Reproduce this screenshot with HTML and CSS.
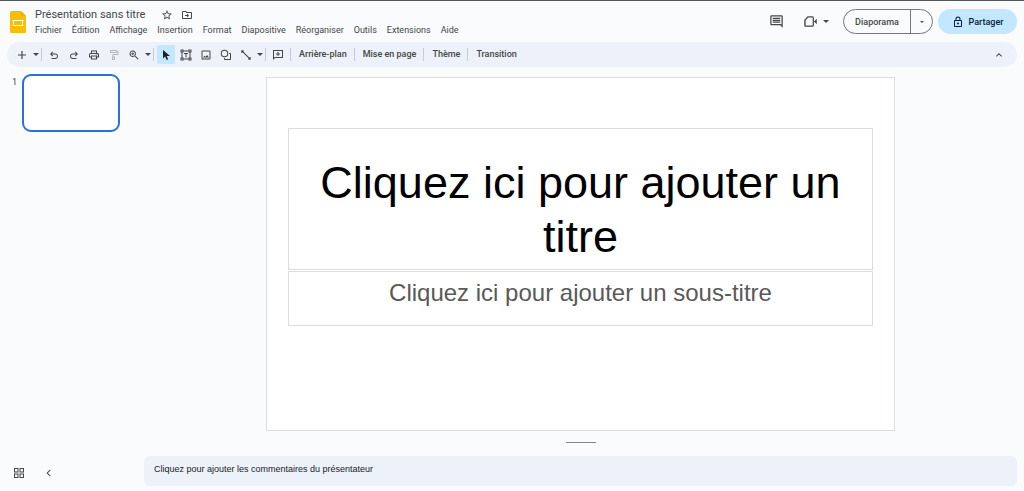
FILE: index.html
```html
<!DOCTYPE html>
<html lang="fr">
<head>
<meta charset="utf-8">
<title>Présentation sans titre</title>
<link rel="stylesheet" href="styles.css">
</head>
<body>
<header class="header">
  <svg class="logo" viewBox="0 0 16 22" aria-hidden="true"><path fill="#fbbc04" d="M1.500 0H11l5 5v15.500a1.500 1.500 0 0 1-1.500 1.500h-13A1.500 1.500 0 0 1 0 20.500v-19A1.500 1.500 0 0 1 1.500 0z"/><path fill="#f5ab00" d="M11 0l5 5h-5z"/><path fill="none" stroke="#fff" stroke-width="1" d="M3.500 9.500h9v5h-9z"/><path fill="#fff" d="M2.500 9h1v1h-1zM12.500 9h1v1h-1zM2.500 14h1v1h-1zM12.500 14h1v1h-1z"/></svg>
  <div class="heading">
    <div class="title-row">
      <h1 class="doc-title">Présentation sans titre</h1>
      <button class="icon-btn" aria-label="Favori"><svg class="icon" viewBox="0 0 24 24"><path d="M22 9.240l-7.190-.620L12 2 9.190 8.630 2 9.240l5.460 4.730L5.820 21 12 17.270 18.180 21l-1.630-7.030L22 9.240zM12 15.400l-3.760 2.270 1-4.280-3.320-2.880 4.380-.380L12 6.100l1.710 4.040 4.380.380-3.320 2.880 1 4.280L12 15.400z"/></svg></button>
      <button class="icon-btn" aria-label="Déplacer"><svg class="icon" viewBox="0 0 24 24"><path d="M20 6h-8l-2-2H4a2 2 0 0 0-2 2v12c0 1.100.9 2 2 2h16a2 2 0 0 0 2-2V8a2 2 0 0 0-2-2zm0 12H4V6h5.200l2 2H20v10zm-8-1 4-4-4-4v3H8v2h4v3z"/></svg></button>
    </div>
    <nav class="menus">
      <button>Fichier</button><button>Édition</button><button>Affichage</button><button>Insertion</button><button>Format</button><button>Diapositive</button><button>Réorganiser</button><button>Outils</button><button>Extensions</button><button>Aide</button>
    </nav>
  </div>
  <div class="actions">
    <button class="icon-btn" aria-label="Commentaires"><svg class="icon-lg" viewBox="0 0 24 24"><path d="M22 4a2 2 0 0 0-2-2H4a2 2 0 0 0-2 2v12c0 1.100.9 2 2 2h14l4 4V4zm-2 13.200L18.800 16H4V4h16v13.200zM6 12h12v2H6zm0-3h12v2H6zm0-3h12v2H6z"/></svg></button>
    <button class="icon-btn meet" aria-label="Visioconférence"><svg class="icon-lg" viewBox="0 0 24 24"><path d="M7.500 3.500H15a2.500 2.500 0 0 1 2.500 2.500v12a2.500 2.500 0 0 1-2.500 2.500H4a2 2 0 0 1-2-2V9.500zM8.300 5.700 4.200 10.300v8h11.300V5.700zM17.500 12 22 7.500v9z"/></svg><i class="caret"></i></button>
    <div class="split">
      <button class="present">Diaporama</button><button class="present-more" aria-label="Options du diaporama"><i class="caret"></i></button>
    </div>
    <button class="share"><svg class="icon" viewBox="0 0 24 24"><path d="M18 8h-1V6A5 5 0 0 0 7 6v2H6a2 2 0 0 0-2 2v10c0 1.100.9 2 2 2h12a2 2 0 0 0 2-2V10a2 2 0 0 0-2-2zM9 6a3 3 0 0 1 6 0v2H9V6zm9 14H6V10h12v10zm-6-3a2 2 0 1 0 0-4 2 2 0 0 0 0 4z"/></svg>Partager</button>
  </div>
</header>

<div class="toolbar" role="toolbar">
  <div class="group">
    <button class="tool" aria-label="Nouvelle diapositive"><svg class="icon" viewBox="0 0 24 24"><path d="M20 13.200h-6.800V20h-2.400v-6.800H4v-2.400h6.800V4h2.400v6.800H20z"/></svg></button>
    <button class="drop" aria-label="Mise en page de la nouvelle diapositive"><i class="caret"></i></button>
  </div>
  <div class="group">
    <button class="tool" aria-label="Annuler"><svg class="icon" viewBox="0 0 24 24"><path d="M7 20v-2h7.500c2 0 3.500-1.400 3.500-3.500S16.500 11 14.500 11H7.800l2.600 2.600L9 15l-5-5 5-5 1.400 1.400L7.800 9h6.700c3.200 0 5.500 2.400 5.500 5.500S17.700 20 14.500 20z"/></svg></button>
    <button class="tool" aria-label="Rétablir"><svg class="icon" viewBox="0 0 24 24"><path d="M17 20v-2H9.500C7.500 18 6 16.600 6 14.500S7.500 11 9.500 11h6.700l-2.600 2.600L15 15l5-5-5-5-1.400 1.400L16.200 9H9.500C6.300 9 4 11.400 4 14.500S6.300 20 9.500 20z"/></svg></button>
    <button class="tool" aria-label="Imprimer"><svg class="icon" viewBox="0 0 24 24"><path d="M19 8h-1V3H6v5H5a3 3 0 0 0-3 3v6h4v4h12v-4h4v-6a3 3 0 0 0-3-3zM8 5h8v3H8V5zm8 14H8v-4h8v4zm4-4h-2v-2H6v2H4v-4c0-.6.4-1 1-1h14c.6 0 1 .4 1 1v4zm-3-3.500a1 1 0 1 0 2 0 1 1 0 0 0-2 0z"/></svg></button>
    <button class="tool" aria-label="Reproduire la mise en forme" disabled><svg class="icon" viewBox="0 0 24 24"><path d="M18 4V3c0-.6-.4-1-1-1H5c-.6 0-1 .4-1 1v4c0 .6.4 1 1 1h12c.6 0 1-.4 1-1V6h1v4H9v5H8v7h6v-7h-3v-3h10V4h-3zM6 6V4h10v2H6zm6 11v3h-2v-3z"/></svg></button>
    <button class="tool" aria-label="Zoom"><svg class="icon" viewBox="0 0 24 24"><path d="M15.500 14h-.8l-.3-.3A6.500 6.500 0 1 0 13.700 14.400l.3.300v.8l5.500 5.500 1.500-1.500-5.500-5.500zm-6 0a4.500 4.500 0 1 1 0-9 4.500 4.500 0 0 1 0 9zM10.500 7h-2v1.500H7v2h1.500V12h2v-1.500H12v-2h-1.500z"/></svg></button>
    <button class="drop" aria-label="Niveau de zoom"><i class="caret"></i></button>
  </div>
  <div class="group">
    <button class="tool tool-active" aria-label="Sélectionner" aria-pressed="true"><svg class="icon" viewBox="0 0 24 24"><path d="M6 2v17l4.300-4 3 7 3-1.300-3-6.700H20L6 2z"/></svg></button>
    <button class="tool" aria-label="Zone de texte"><svg class="icon" viewBox="0 0 24 24"><path d="M1 1h6v2h10V1h6v6h-2v10h2v6h-6v-2H7v2H1v-6h2V7H1V1zm6 6H5v10h2v2h10v-2h2V7h-2V5H7v2zM3 3v2h2V3H3zm16 0v2h2V3h-2zM3 19v2h2v-2H3zm16 0v2h2v-2h-2zM8 8h8v2h-3v7h-2v-7H8z"/></svg></button>
    <button class="tool" aria-label="Image"><svg class="icon" viewBox="0 0 24 24"><path d="M19 3H5a2 2 0 0 0-2 2v14c0 1.100.9 2 2 2h14a2 2 0 0 0 2-2V5a2 2 0 0 0-2-2zm0 16H5V5h14v14zM6 17h12l-3.900-5-2.900 3.700-2.100-2.400z"/></svg></button>
    <button class="tool" aria-label="Forme"><svg class="icon" viewBox="0 0 24 24"><path d="M9 1.500a7.500 7.500 0 1 0 0 15 7.500 7.500 0 0 0 0-15zm0 2a5.500 5.500 0 1 1 0 11 5.500 5.500 0 0 1 0-11zM18 8h2a2 2 0 0 1 2 2v10a2 2 0 0 1-2 2H10a2 2 0 0 1-2-2v-2h2v2h10V10h-2z"/></svg></button>
    <button class="tool" aria-label="Ligne"><svg class="icon" viewBox="0 0 24 24"><path d="M2.500 2.500h4.800v3.300l10.900 10.900h3.300v4.800h-4.800v-3.300L5.800 7.300H2.500z"/></svg></button>
    <button class="drop" aria-label="Types de ligne"><i class="caret"></i></button>
  </div>
  <div class="group">
    <button class="tool" aria-label="Ajouter un commentaire"><svg class="icon" viewBox="0 0 24 24"><path d="M2 2h20v16H6l-4 4V2zm2 2v13l1-1h15V4H4zm7 2h2v3h3v2h-3v3h-2v-3H8V9h3z"/></svg></button>
  </div>
  <div class="group"><button class="text-tool">Arrière-plan</button></div>
  <div class="group"><button class="text-tool">Mise en page</button></div>
  <div class="group"><button class="text-tool">Thème</button></div>
  <div class="group"><button class="text-tool">Transition</button></div>
  <button class="tool collapse" aria-label="Masquer les menus"><svg class="icon" viewBox="0 0 24 24"><path d="M12 8l-6 6 1.400 1.400L12 10.800l4.600 4.600L18 14z"/></svg></button>
</div>

<main class="workspace">
  <aside class="filmstrip">
    <div class="film-item"><span class="film-number">1</span><button class="thumb" aria-label="Diapositive 1"></button></div>
    <div class="film-footer">
      <button class="icon-btn" aria-label="Vue grille"><svg class="icon" viewBox="0 0 24 24"><path d="M2 2h9v9H2V2zm2 2v5h5V4H4zm9-2h9v9h-9V2zm2 2v5h5V4h-5zM2 13h9v9H2v-9zm2 2v5h5v-5H4zm9-2h9v9h-9v-9zm2 2v5h5v-5h-5z"/></svg></button>
      <button class="icon-btn" aria-label="Masquer la pellicule"><svg class="icon" viewBox="0 0 24 24"><path d="M15.400 6.400 14 5l-7 7 7 7 1.400-1.400L9.800 12z"/></svg></button>
    </div>
  </aside>
  <section class="editor">
    <div class="slide">
      <div class="box box-title">Cliquez ici pour ajouter un titre</div>
      <div class="box box-subtitle">Cliquez ici pour ajouter un sous-titre</div>
    </div>
    <div class="handle"></div>
    <div class="notes">Cliquez pour ajouter les commentaires du présentateur</div>
  </section>
</main>
</body>
</html>
```
FILE: styles.css
```css
* { box-sizing: border-box; }

body {
  margin: 0;
  min-height: 100vh;
  display: flex;
  flex-direction: column;
  background: #f9fbfd;
  border-top: 1px solid #55565a;
  color: #444746;
  font: 9px/12px Roboto, "Open Sans", sans-serif;
}

button {
  margin: 0;
  padding: 0;
  border: 0;
  background: none;
  color: inherit;
  font: inherit;
  display: flex;
  align-items: center;
  justify-content: center;
}

svg { display: block; fill: currentColor; flex: none; }
.icon { width: 12px; height: 12px; }
.icon-lg { width: 15px; height: 15px; }

.caret {
  border: 3px solid transparent;
  border-top-color: currentColor;
  border-bottom: 0;
}

.header {
  display: flex;
  height: 41px;
  padding: 0 7px 0 10px;
}

.logo { width: 16px; height: 22px; margin-top: 10px; }
.heading { margin-left: 9px; padding-top: 6px; }
.title-row { display: flex; align-items: center; gap: 8px; height: 15px; }

.doc-title {
  margin: 0 8px 0 0;
  font-size: 11px;
  font-weight: 400;
  line-height: 15px;
}

.menus { display: flex; gap: 10px; margin-top: 2px; }

.actions {
  display: flex;
  align-items: center;
  margin-left: auto;
  height: 25px;
  margin-top: 8px;
}

.meet { gap: 5px; margin: 0 14px 0 19px; }
.present-more .caret { border-width: 2px; border-bottom: 0; }

.split {
  display: flex;
  height: 25px;
  border: 1px solid #747775;
  border-radius: 13px;
}

.present { width: 66px; font-weight: 500; }
.present-more { width: 22px; border-left: 1px solid #747775; }

.share {
  width: 79px;
  height: 25px;
  margin-left: 5px;
  gap: 5px;
  border-radius: 13px;
  background: #c2e7ff;
  color: #001d35;
  font-weight: 500;
}

.toolbar {
  display: flex;
  align-items: center;
  height: 25px;
  margin: 0 7px;
  padding: 0 8px 0 5px;
  border-radius: 13px;
  background: #edf2fa;
}

.group { display: flex; align-items: center; }
.group + .group { border-left: 1px solid #c7cbd1; height: 13px; padding-left: 2px; }
.tool { width: 20px; height: 20px; }
.tool:disabled { color: #b4b7bb; }
.tool-active { width: 18px; height: 19px; margin: 0 1px; border-radius: 2px; background: #c2e7ff; color: #1f1f1f; }
.drop { width: 8px; height: 20px; margin-right: 1px; }
.group:nth-child(4) { padding-right: 2px; }
.text-tool { padding: 0 7px 2px 6px; font-weight: 500; }
.collapse { margin-left: auto; }

.workspace { display: flex; flex: 1; padding: 0 7px 5px 0; }

.filmstrip {
  display: flex;
  flex-direction: column;
  justify-content: space-between;
  width: 144px;
  padding: 7px 0 0 12px;
}

.film-item { display: flex; gap: 5px; }
.film-number { width: 5px; padding-top: 2px; }

.thumb {
  width: 98px;
  height: 58px;
  border: 2px solid #2a6fdb;
  border-radius: 9px;
  background: #fff;
}

.film-footer { display: flex; gap: 18px; padding: 0 1px 7px; }

.editor {
  flex: 1;
  display: flex;
  flex-direction: column;
  align-items: center;
  padding-top: 10px;
}

.slide {
  width: 72%;
  aspect-ratio: 16 / 9;
  padding: 50px 21px 0;
  border: 1px solid #dadce0;
  background: #fff;
  font-family: "Liberation Sans", Arial, sans-serif;
  text-align: center;
}

.box { border: 1px solid #dadce0; }

.box-title {
  padding: 27px 20px 5px;
  color: #000;
  font-size: 45px;
  line-height: 54px;
}

.box-subtitle {
  margin-top: 1px;
  padding: 6px 8px 18px;
  color: #595959;
  font-size: 24px;
  line-height: 29px;
}

.handle { width: 30px; height: 1px; margin-top: 11px; background: #80868b; }

.notes {
  width: 100%;
  height: 30px;
  margin-top: auto;
  padding: 7px 10px;
  border-radius: 6px;
  background: #edf2fa;
  color: #202124;
  font-family: "Liberation Sans", Arial, sans-serif;
}
```
